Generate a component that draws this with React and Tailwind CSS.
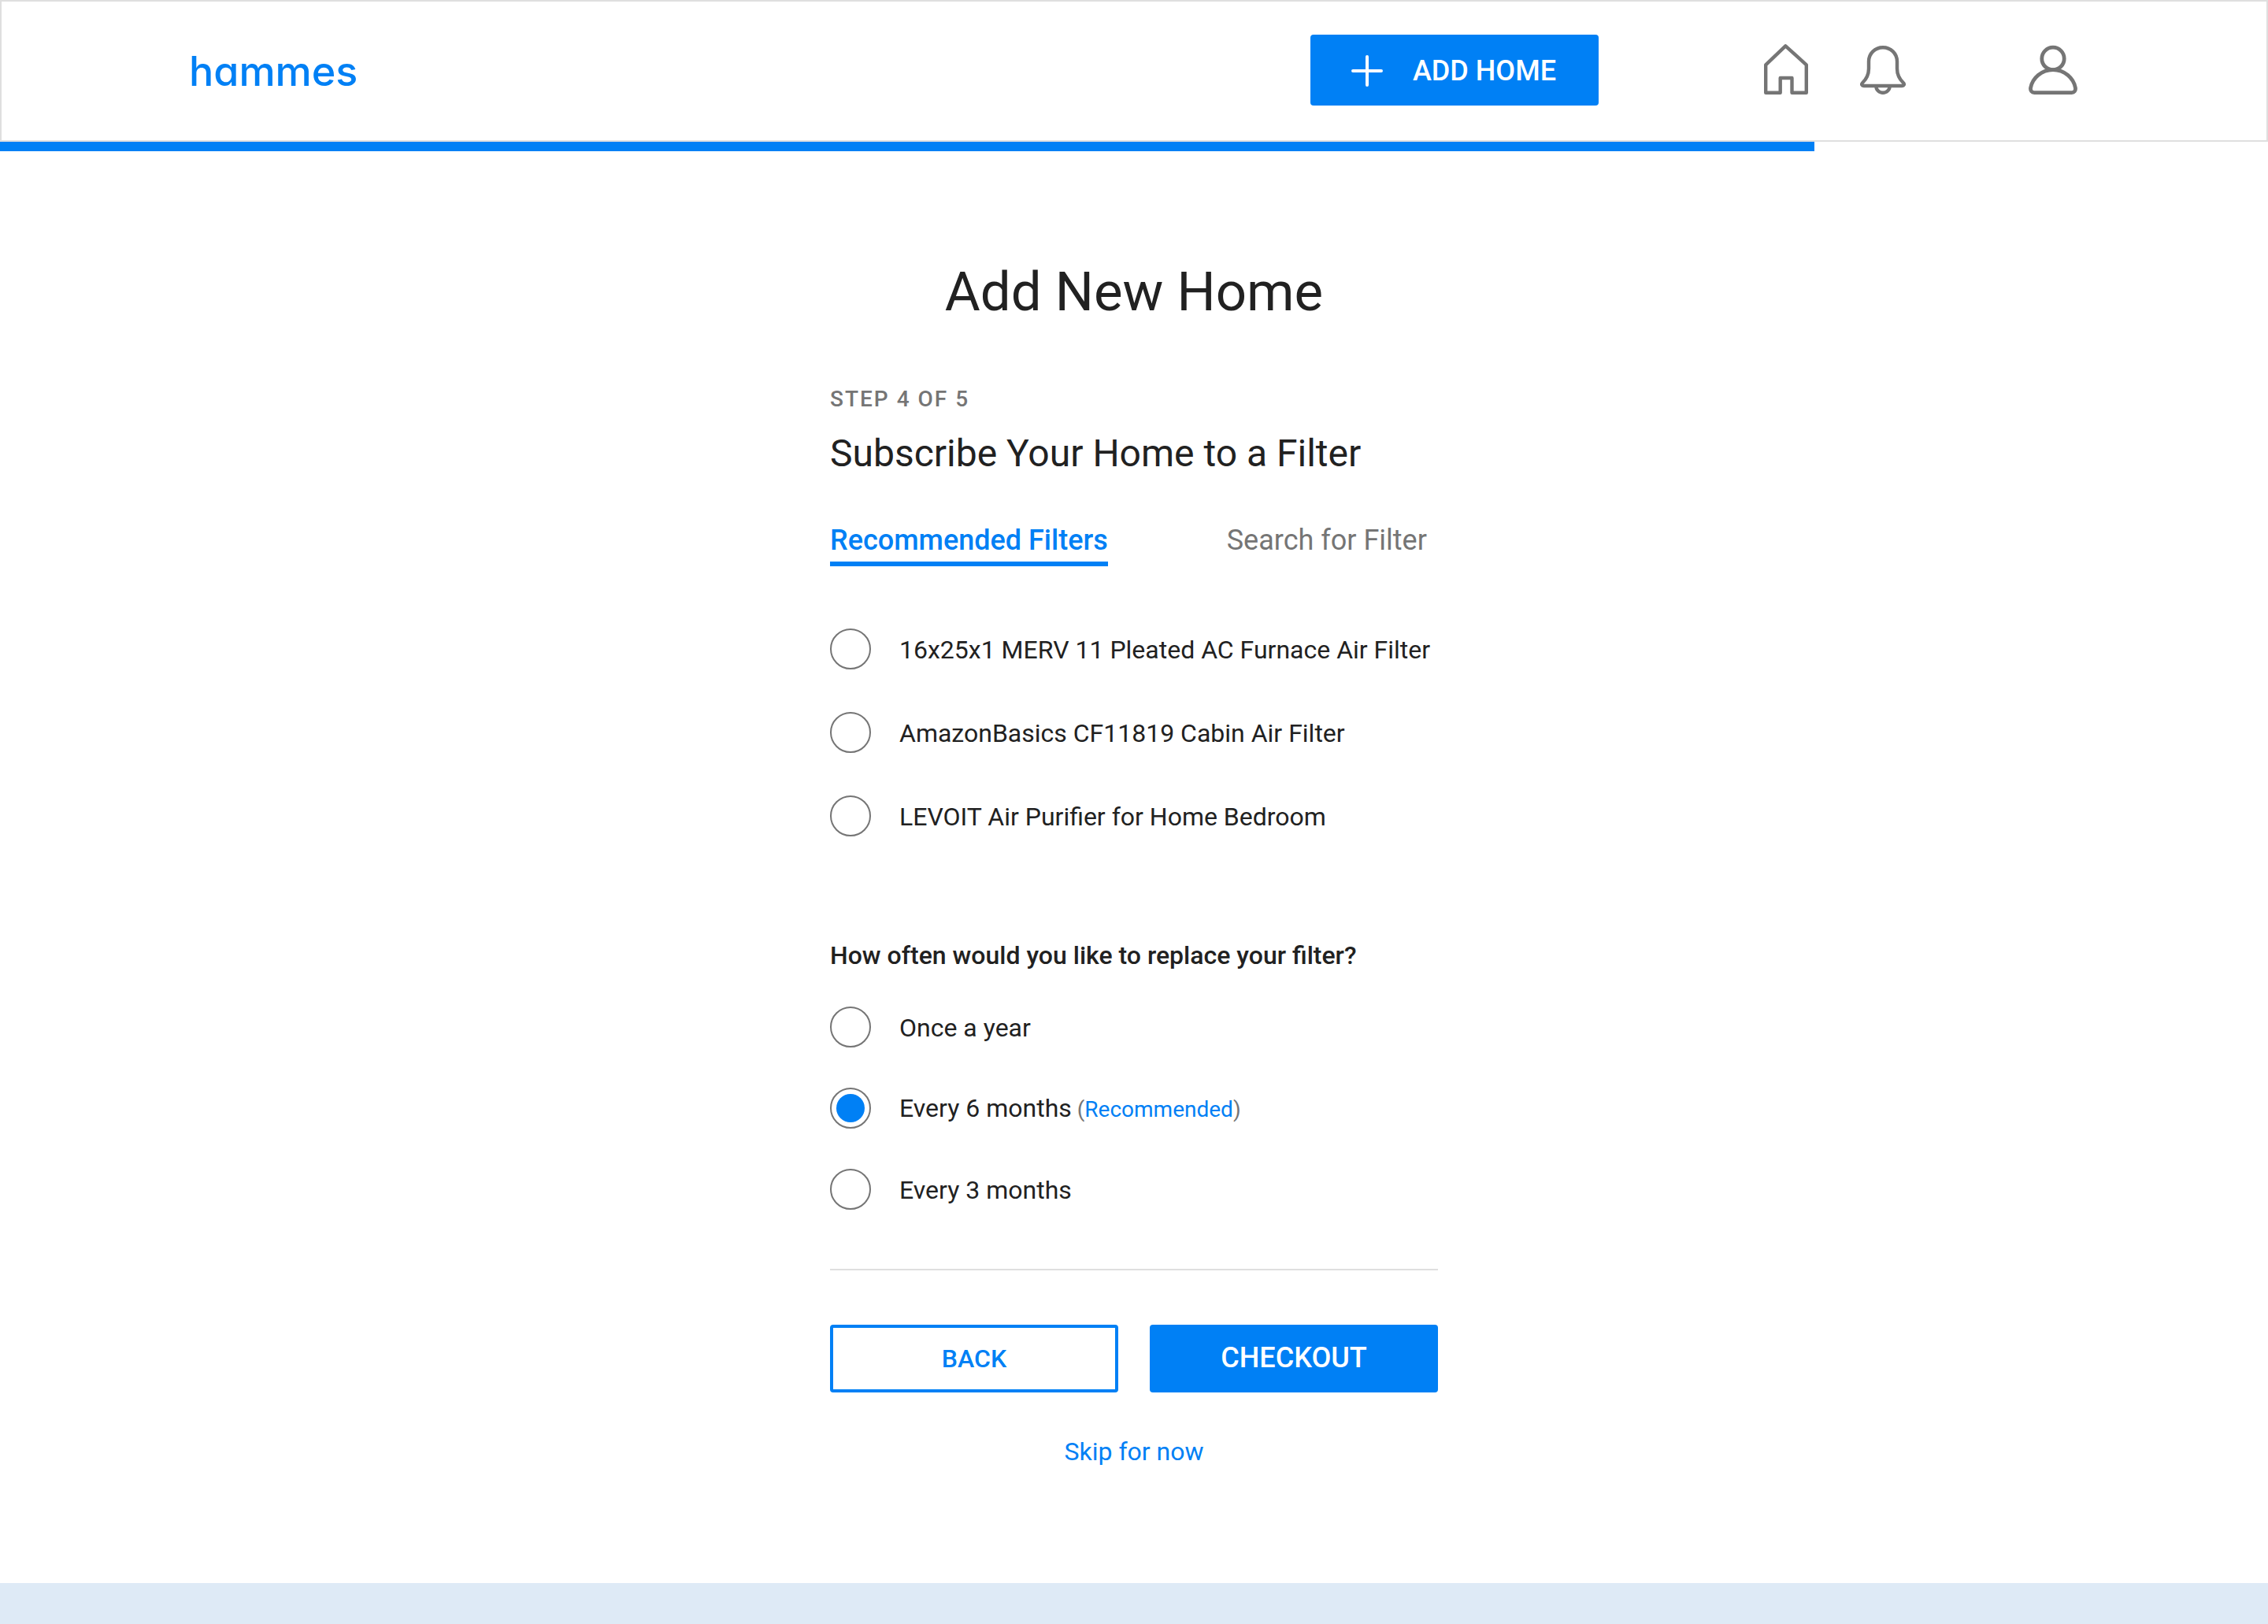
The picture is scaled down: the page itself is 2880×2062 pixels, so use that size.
import { useState } from "react";

const filters = [
  "16x25x1 MERV 11 Pleated AC Furnace Air Filter",
  "AmazonBasics CF11819 Cabin Air Filter",
  "LEVOIT Air Purifier for Home Bedroom",
];

const intervals = [
  { label: "Once a year" },
  { label: "Every 6 months", recommended: true },
  { label: "Every 3 months" },
];

function HomeIcon() {
  return (
    <svg width="56" height="64" viewBox="0 0 56 64" fill="none" stroke="currentColor" strokeWidth="4.4" strokeLinejoin="round" aria-hidden="true">
      <path d="M27.3 2.4 2.200 26.3V61.800h18.500V43h14.800v18.800H53.800V26.3Z" />
    </svg>
  );
}

function BellIcon() {
  return (
    <svg width="58" height="64" viewBox="0 0 58 64" fill="none" stroke="currentColor" strokeWidth="4.4" strokeLinejoin="round" aria-hidden="true">
      <path d="M29 4.2C19 4.2 11 12 11 22v9c0 8-2.600 13-7.800 18-2 2-.9 4 1.400 4h48.800c2.300 0 3.400-2 1.400-4C49.600 44 47 39 47 31v-9C47 12 39 4.2 29 4.2Z" />
      <path d="M20.300 53.200a8.700 8.600 0 0 0 17.400 0" />
    </svg>
  );
}

function UserIcon() {
  return (
    <svg width="62" height="64" viewBox="0 0 62 64" fill="none" stroke="currentColor" strokeWidth="4.800" strokeLinejoin="round" aria-hidden="true">
      <circle cx="31" cy="18.400" r="14.200" />
      <path d="M31 32.600C16.500 32.600 4.800 43 2.600 55.500c-.6 3.600 1.500 6.100 4.600 6.100h47.600c3.100 0 5.200-2.500 4.600-6.100C57.200 43 45.500 32.600 31 32.600Z" />
    </svg>
  );
}

function PlusIcon() {
  return (
    <svg width="40" height="40" viewBox="0 0 40 40" stroke="currentColor" strokeWidth="4" strokeLinecap="round" aria-hidden="true">
      <path d="M20 2v36M2 20h36" />
    </svg>
  );
}

function RadioOption({ name, checked, onChange, children }) {
  return (
    <label className="flex cursor-pointer items-center gap-9">
      <input
        type="radio"
        name={name}
        checked={checked}
        onChange={onChange}
        className="size-[52px] shrink-0 appearance-none rounded-full border-2 border-[#757575] bg-white bg-clip-content p-1.5 checked:bg-[#0080f5]"
      />
      <span className="pt-0.5 text-[32px] leading-10">{children}</span>
    </label>
  );
}

export default function App() {
  const [filter, setFilter] = useState(null);
  const [interval, setInterval] = useState("Every 6 months");

  return (
    <div className="flex min-h-screen flex-col bg-white font-['Roboto',sans-serif] text-[#212121]">
      <header className="flex items-center justify-between border-2 border-[#dfdfdf] px-[238px] pt-[42px] pb-11">
        <a href="#" className="pt-1 font-['Inter',sans-serif] text-[52px] leading-16 font-medium text-[#0080f5] [font-feature-settings:'cv11']">
          hammes
        </a>
        <div className="flex items-center pr-0.5">
          <button type="button" className="flex h-[90px] w-[366px] items-center gap-[38px] rounded bg-[#0080f5] pt-0.5 pl-[52px] text-4xl font-medium text-white">
            <PlusIcon />
            ADD HOME
          </button>
          <nav className="ml-[210px] flex items-center pb-0.5 text-[#757575]">
            <a href="#" aria-label="Home"><HomeIcon /></a>
            <a href="#" aria-label="Notifications" className="ml-[66px]"><BellIcon /></a>
            <a href="#" aria-label="Account" className="ml-[156px]"><UserIcon /></a>
          </nav>
        </div>
      </header>
      <div role="progressbar" aria-label="Progress" aria-valuenow={80} aria-valuemin={0} aria-valuemax={100} className="h-3">
        <div className="h-full w-4/5 bg-[#0080f5]" />
      </div>

      <main className="mx-auto w-full max-w-[772px] grow pt-[139px]">
        <h1 className="text-center text-[69px] leading-[80px]">Add New Home</h1>
        <p className="mt-20 text-[28px] leading-8 font-medium tracking-[2px] text-[#757575]">STEP 4 OF 5</p>
        <h2 className="mt-[25px] text-5xl leading-14">Subscribe Your Home to a Filter</h2>

        <div role="tablist" className="mt-[60px] flex items-start gap-[151px] text-4xl leading-11">
          <button type="button" role="tab" aria-selected="true" className="border-b-6 border-[#0080f5] pb-[5px] font-medium text-[#0080f5]">
            Recommended Filters
          </button>
          <button type="button" role="tab" aria-selected="false" className="text-[#757575]">
            Search for Filter
          </button>
        </div>

        <div role="radiogroup" aria-label="Recommended filters" className="mt-[79px] flex flex-col gap-[54px]">
          {filters.map((name) => (
            <RadioOption key={name} name="filter" checked={filter === name} onChange={() => setFilter(name)}>
              {name}
            </RadioOption>
          ))}
        </div>

        <h3 id="interval" className="mt-[131px] text-[32px] leading-10 font-medium">
          How often would you like to replace your filter?
        </h3>
        <div role="radiogroup" aria-labelledby="interval" className="mt-[45px] flex flex-col gap-[51px]">
          {intervals.map(({ label, recommended }) => (
            <RadioOption key={label} name="interval" checked={interval === label} onChange={() => setInterval(label)}>
              {label}
              {recommended && (
                <span className="text-[28px] text-[#757575]">
                  {" "}(<span className="text-[#0080f5]">Recommended</span>)
                </span>
              )}
            </RadioOption>
          ))}
        </div>

        <hr className="mt-[75px] border-t-2 border-[#dfdfdf]" />

        <div className="mt-[69px] grid grid-cols-2 gap-10">
          <button type="button" className="h-[86px] rounded border-4 border-[#0080f5] text-[32px] font-medium text-[#0080f5]">
            BACK
          </button>
          <button type="button" className="h-[86px] rounded bg-[#0080f5] pb-0.5 text-4xl font-medium text-white">
            CHECKOUT
          </button>
        </div>
        <div className="mt-[55px] text-center text-[32px] leading-10">
          <a href="#" className="text-[#0080f5]">Skip for now</a>
        </div>
      </main>

      <footer className="h-[52px] bg-[#deeaf6]" />
    </div>
  );
}
